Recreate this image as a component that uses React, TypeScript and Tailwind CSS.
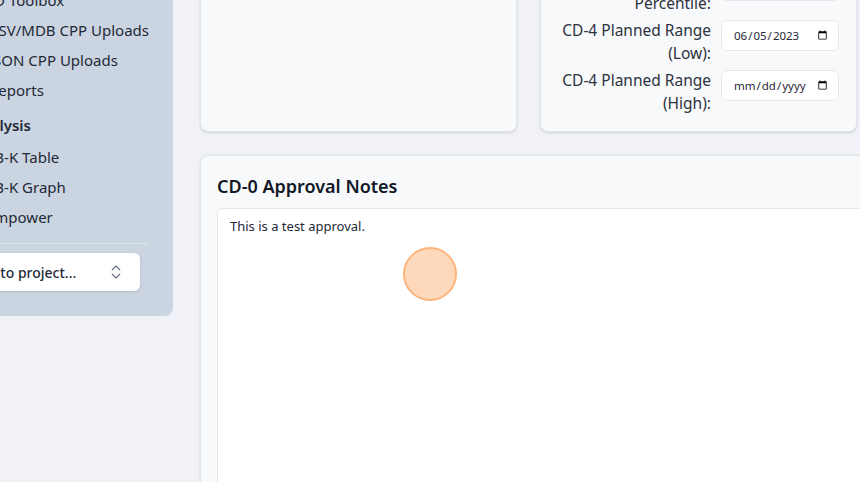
import React from 'react';
import { ChevronsUpDown } from 'lucide-react';

const toolboxLinks = ['ID Toolbox', 'CSV/MDB CPP Uploads', 'JSON CPP Uploads', 'Reports'];
const analysisLinks = ['EB-K Table', 'EB-K Graph', 'Empower'];

const scheduleRows = [
  { label: 'CD-3 Approval Date (Actual):', value: '' },
  { label: 'CD-4 Planned Range (Point):', value: '' },
  { label: 'CD-4 Planned Range Percentile:', value: '' },
  { label: 'CD-4 Planned Range (Low):', value: '2023-06-05' },
  { label: 'CD-4 Planned Range (High):', value: '' },
];

const Sidebar = () => (
  <aside className="-ml-[67px] -mt-[31px] w-[240px] shrink-0 rounded-br-lg bg-[#cbd5e1] pt-4 pb-[25px] pl-[31px] pr-[24px] text-[15px] text-[#1f2937]">
    <nav className="flex flex-col">
      {toolboxLinks.map((link) => (
        <a key={link} className="flex h-[30px] items-center whitespace-nowrap pl-[25px]">
          {link}
        </a>
      ))}
      <div className="mt-[5px] flex h-[30px] items-center pl-[7px] font-semibold">Analysis</div>
      <div className="mt-[2px] flex flex-col">
        {analysisLinks.map((link) => (
          <a key={link} className="flex h-[30px] items-center whitespace-nowrap pl-[22px]">
            {link}
          </a>
        ))}
      </div>
    </nav>
    <div className="mt-[11px] h-px bg-[#dbe1ea]" />
    <button className="mt-[9px] mr-[9px] flex h-[38px] w-[176px] items-center justify-between rounded-md bg-white pl-[14px] pr-[15px] text-[14px] font-medium text-[#1f2937] shadow-sm">
      <span className="whitespace-nowrap">Go to project...</span>
      <ChevronsUpDown size={18} strokeWidth={1.6} className="text-gray-500" />
    </button>
  </aside>
);

const card = 'rounded-lg border border-[#e2e6ec] bg-[#f8f9fb] shadow-sm';

const App = () => {
  return (
    <div className="relative h-[482px] w-[860px] overflow-hidden bg-[#f0f2f7] font-['Noto_Sans',sans-serif]">
      <div className="flex items-start">
        <Sidebar />
        <main className="-mt-[148px] w-[1000px] shrink-0 pl-[27px]">
          <div className="grid grid-cols-[317px_317px_317px] gap-[23px]">
            <div className={card} />
            <div className={`${card} py-4 pl-4 pr-[17px]`}>
              <div className="flex flex-col gap-[4px]">
                {scheduleRows.map((row) => (
                  <div key={row.label} className="grid grid-cols-[1fr_118px] items-start gap-x-[10px]">
                    <label className="text-right text-[15.5px] leading-[23px] text-[#2d3340]">{row.label}</label>
                    <input
                      type="date"
                      defaultValue={row.value}
                      className="mt-[1px] h-[31px] w-[118px] rounded-md border border-[#e5e7eb] bg-white pl-[11px] pr-[8px] text-[11.5px] text-[#1f2937]"
                    />
                  </div>
                ))}
              </div>
            </div>
            <div className={card} />
          </div>

          <section className={`${card} mt-[23px] px-4 pt-[17px]`}>
            <h2 className="text-[18px] font-semibold leading-[26px] text-[#111827]">CD-0 Approval Notes</h2>
            <textarea
              defaultValue="This is a test approval."
              className="mt-[9px] block h-[320px] w-full resize-none rounded-md border border-[#e5e7eb] bg-white px-[12px] py-[7px] text-[13px] leading-[20px] text-[#1f2937] outline-none"
            />
          </section>
        </main>
      </div>

      {/* click marker */}
      <div className="pointer-events-none absolute left-[403px] top-[247px] h-[54px] w-[54px] rounded-full border-2 border-[#fdb47c] bg-[#fdd8bb]" />
    </div>
  );
};

export default App;
